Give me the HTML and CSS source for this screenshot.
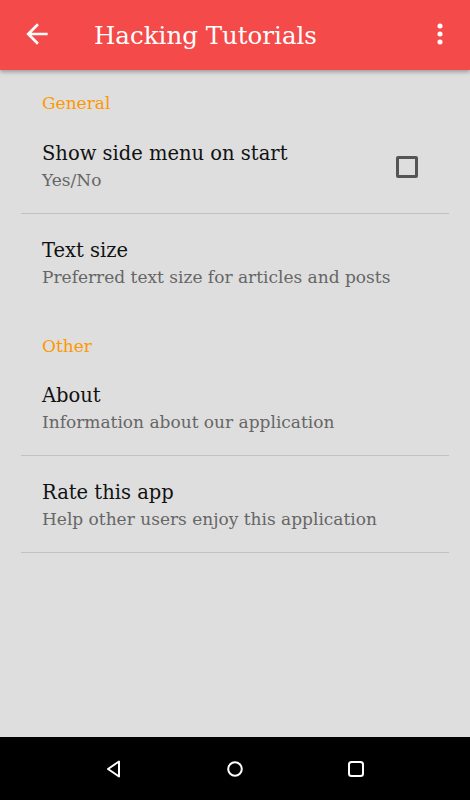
FILE: index.html
```html
<!DOCTYPE html>
<html lang="en">
<head>
  <meta charset="UTF-8">
  <meta name="viewport" content="width=device-width, initial-scale=1.0">
  <title>Hacking Tutorials - Settings</title>
  <link rel="stylesheet" href="styles.css">
</head>
<body>
  <div class="screen">
    <header class="appbar">
      <button class="icon-btn back" aria-label="Back">
        <svg width="32" height="32" viewBox="0 0 24 24"><path d="M20 11H7.83l5.59-5.59L12 4l-8 8 8 8 1.41-1.41L7.83 13H20v-2z" fill="#fff"/></svg>
      </button>
      <h1 class="title">Hacking Tutorials</h1>
      <button class="icon-btn more" aria-label="More options">
        <svg width="32" height="32" viewBox="0 0 24 24"><circle cx="12" cy="6" r="1.9" fill="#fff"/><circle cx="12" cy="12" r="1.9" fill="#fff"/><circle cx="12" cy="18" r="1.9" fill="#fff"/></svg>
      </button>
    </header>

    <main class="prefs">
      <div class="category first">General</div>

      <div class="pref divided">
        <div class="pref-text">
          <div class="pref-title">Show side menu on start</div>
          <div class="pref-summary">Yes/No</div>
        </div>
        <span class="checkbox"></span>
      </div>

      <div class="pref">
        <div class="pref-text">
          <div class="pref-title">Text size</div>
          <div class="pref-summary">Preferred text size for articles and posts</div>
        </div>
      </div>

      <div class="category">Other</div>

      <div class="pref divided">
        <div class="pref-text">
          <div class="pref-title">About</div>
          <div class="pref-summary">Information about our application</div>
        </div>
      </div>

      <div class="pref divided">
        <div class="pref-text">
          <div class="pref-title">Rate this app</div>
          <div class="pref-summary">Help other users enjoy this application</div>
        </div>
      </div>
    </main>

    <nav class="navbar">
      <svg width="20" height="20" viewBox="0 0 20 20"><path d="M15 2.5v15L4 10z" fill="none" stroke="#fff" stroke-width="2" stroke-linejoin="round"/></svg>
      <svg width="20" height="20" viewBox="0 0 20 20"><circle cx="10" cy="10" r="6.8" fill="none" stroke="#fff" stroke-width="2"/></svg>
      <svg width="20" height="20" viewBox="0 0 20 20"><rect x="3" y="3" width="14" height="14" rx="2.5" fill="none" stroke="#fff" stroke-width="2"/></svg>
    </nav>
  </div>
</body>
</html>
```

FILE: styles.css
```css
body {
  margin: 0;
  font-family: 'DejaVu Serif', 'Liberation Serif', serif;
  background: #dedede;
}

.screen {
  height: 800px;
  display: flex;
  flex-direction: column;
}

.appbar {
  height: 70px;
  flex-shrink: 0;
  display: flex;
  align-items: center;
  background-color: #f44a4a;
  box-shadow: 0 2px 4px rgba(0,0,0,0.3);
  position: relative;
  z-index: 1;
}

.icon-btn {
  background: none;
  border: none;
  padding: 0;
  width: 32px;
  height: 32px;
  display: flex;
}

.back {
  margin-left: 21px;
  margin-top: -2px;
}

.title {
  margin: 0 0 0 41px;
  flex: 1;
  color: #fff;
  font-size: 24.5px;
  font-weight: normal;
}

.more {
  margin-right: 14px;
  margin-top: -3px;
}

.prefs {
  flex: 1;
  padding: 0 21px;
}

.category {
  height: 48px;
  box-sizing: border-box;
  padding: 23px 0 0 21px;
  color: #ff9800;
  font-size: 17px;
  line-height: 24px;
}

.category.first {
  height: 47px;
  padding-top: 21px;
}

.pref {
  display: flex;
  align-items: center;
  height: 97px;
  box-sizing: border-box;
  padding: 0 31px 0 21px;
}

.pref.divided {
  border-bottom: 1px solid #c2c2c2;
}

.pref-text {
  flex: 1;
  margin-top: 2px;
}

.pref-title {
  color: #111;
  font-size: 19.5px;
  line-height: 26px;
}

.pref-summary {
  color: #666;
  font-size: 17px;
  line-height: 24px;
  margin-top: 1px;
}

.checkbox {
  width: 22px;
  height: 22px;
  box-sizing: border-box;
  border: 3px solid #555;
  border-radius: 2px;
  margin-top: 3px;
}

.navbar {
  height: 63px;
  flex-shrink: 0;
  background: #000;
  display: flex;
  justify-content: center;
  align-items: center;
  gap: 101px;
}
```
